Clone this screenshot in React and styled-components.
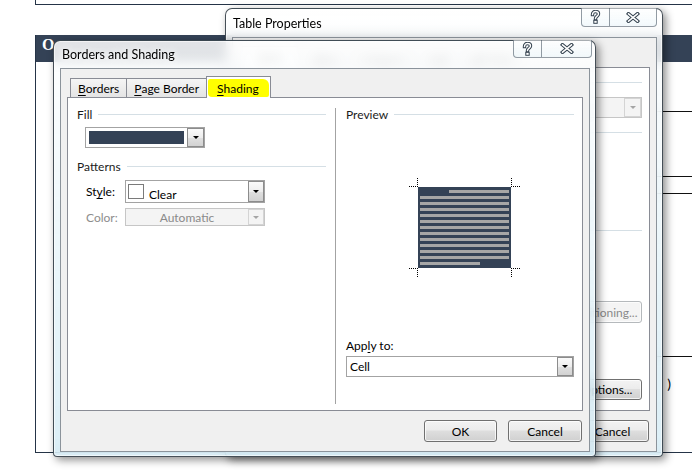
import React from "react";
import styled, { createGlobalStyle } from "styled-components";

const UI_FONT = `Lato, "Noto Sans", "Liberation Sans", sans-serif`;

const GlobalStyle = createGlobalStyle`
  html, body {
    margin: 0;
    padding: 0;
    background: #fff;
  }
  body {
    font-family: ${UI_FONT};
    font-size: 12px;
    color: #000;
  }
`;

const Desktop = styled.div`
  position: relative;
  width: 692px;
  height: 475px;
  overflow: hidden;
  background: #fff;
`;

/* Word document behind the dialogs */

const Document = styled.div`
  position: absolute;
  inset: 0;
  padding-left: 35px;
`;

const PrevBox = styled.div`
  height: 4px;
  border-left: 1px solid #253447;
  border-bottom: 1px solid #253447;
`;

const DocTable = styled.div`
  margin-top: 30px;
  width: 700px;
  border-left: 1px solid #253447;
  border-bottom: 1px solid #253447;
  display: flex;
  flex-direction: column;
`;

const HeaderRow = styled.div`
  height: 27px;
  background: #344256;
  color: #fff;
  font-family: "Liberation Serif", serif;
  font-weight: bold;
  font-size: 16px;
  line-height: 20px;
  padding-left: 6px;
`;

const DocRow = styled.div`
  height: ${(p) => p.$h}px;
  margin-left: 330px;
  border-bottom: ${(p) => (p.$last ? "none" : "1px solid #111")};
  display: flex;
  justify-content: flex-end;
  align-items: flex-start;
  padding-right: 65px;
  padding-top: ${(p) => p.$pt || 0}px;
  font-size: 14px;
`;

/* windows */

const Window = styled.div`
  position: absolute;
  left: ${(p) => p.$x}px;
  top: ${(p) => p.$y}px;
  width: ${(p) => p.$w}px;
  height: ${(p) => p.$h}px;
  box-sizing: border-box;
  display: flex;
  flex-direction: column;
  padding: 0 5px 4px 6px;
  border: 1px solid rgba(38, 48, 58, 0.85);
  border-radius: 7px 7px 4px 4px;
  background: linear-gradient(
    rgba(255, 255, 255, 0.86),
    rgba(226, 242, 248, 0.78) 60%,
    rgba(210, 234, 244, 0.8)
  );
  backdrop-filter: blur(6px);
  box-shadow: 3px 3px 9px rgba(0, 0, 0, 0.45),
    inset 0 0 0 1px rgba(255, 255, 255, 0.6);
`;

const TitleBar = styled.div`
  height: ${(p) => p.$h}px;
  flex-shrink: 0;
  display: flex;
  align-items: center;
`;

const TitleText = styled.span`
  flex: 1;
  padding-left: ${(p) => p.$indent}px;
  font-size: 12.5px;
  color: #000;
  text-shadow: 0 0 6px #fff, 0 0 10px #fff;
`;

const CaptionGroup = styled.div`
  display: flex;
  align-self: flex-start;
  margin-top: -1px;
  margin-right: ${(p) => p.$inset}px;
`;

const CaptionButton = styled.div`
  width: ${(p) => p.$w}px;
  height: ${(p) => p.$h}px;
  box-sizing: border-box;
  display: flex;
  align-items: center;
  justify-content: center;
  border: 1px solid rgba(60, 75, 90, 0.55);
  border-top: none;
  background: linear-gradient(rgba(255, 255, 255, 0.55), rgba(228, 242, 248, 0.45));
  &:first-child {
    border-radius: 0 0 0 4px;
  }
  &:last-child {
    border-left: none;
    border-radius: 0 0 4px 0;
  }
`;

const HelpGlyph = () => (
  <svg width="11" height="14" viewBox="0 0 11 14">
    <g fill="none" strokeLinecap="square">
      <path d="M2.5 4.5 C2.5 2.3 4 1.5 5.5 1.5 C7.3 1.5 8.5 2.6 8.5 4 C8.5 6 5.5 6.2 5.5 8.5" stroke="#34424f" strokeWidth="3.4" />
      <rect x="3.8" y="10.3" width="3.4" height="3" fill="#fff" stroke="#34424f" strokeWidth="1" />
      <path d="M2.5 4.5 C2.5 2.3 4 1.5 5.5 1.5 C7.3 1.5 8.5 2.6 8.5 4 C8.5 6 5.5 6.2 5.5 8.5" stroke="#fff" strokeWidth="1.4" />
    </g>
  </svg>
);

const CloseGlyph = () => (
  <svg width="14" height="11" viewBox="0 0 14 11">
    <g strokeLinecap="square">
      <path d="M2.5 1.8 L11.5 9.2 M11.5 1.8 L2.5 9.2" stroke="#34424f" strokeWidth="3.6" />
      <path d="M2.5 1.8 L11.5 9.2 M11.5 1.8 L2.5 9.2" stroke="#fff" strokeWidth="1.5" />
    </g>
  </svg>
);

const Client = styled.div`
  flex: 1;
  min-height: 0;
  display: flex;
  flex-direction: column;
  background: #f0f0f0;
  border: 1px solid #8b939b;
`;

/* tabs */

const TabStrip = styled.div`
  display: flex;
  align-items: flex-end;
  height: ${(p) => p.$h}px;
  margin: ${(p) => p.$top}px 6px 0 6px;
  padding-left: 3px;
  position: relative;
  z-index: 1;
`;

const Tab = styled.div`
  height: ${(p) => (p.$active ? 22 : 19)}px;
  min-width: ${(p) => p.$min || 0}px;
  box-sizing: border-box;
  display: flex;
  align-items: center;
  justify-content: center;
  padding: 0 ${(p) => (p.$active ? 1 : 7)}px;
  margin-bottom: ${(p) => (p.$active ? -1 : 0)}px;
  margin-left: -1px;
  border: 1px solid #898c95;
  border-bottom: none;
  background: ${(p) => (p.$active ? "#fff" : "linear-gradient(#f5f5f5, #e4e4e4)")};
  &:first-child {
    margin-left: 0;
  }
  u {
    text-decoration: underline;
    text-underline-offset: 2px;
  }
`;

const Highlight = styled.span`
  display: flex;
  align-items: center;
  height: 18px;
  margin-top: 1px;
  padding: 0 10px 0 9px;
  background: #ffff00;
  border-radius: 2px 6px 2px 4px;
`;

const TabPanel = styled.div`
  flex: 1;
  min-height: 0;
  background: #fff;
  border: 1px solid #898c95;
  margin: 0 6px 0 6px;
`;

const Footer = styled.div`
  display: flex;
  justify-content: flex-end;
  gap: 11px;
  padding: 9px 7px 9px;
`;

const PushButton = styled.div`
  width: ${(p) => p.$w}px;
  height: ${(p) => p.$h || 22}px;
  box-sizing: border-box;
  display: flex;
  align-items: center;
  justify-content: center;
  white-space: nowrap;
  border: 1px solid ${(p) => (p.$disabled ? "#b5b9bc" : "#707070")};
  border-radius: 3px;
  color: ${(p) => (p.$disabled ? "#8a8a8a" : "#000")};
  background: ${(p) =>
    p.$disabled
      ? "#f4f4f4"
      : "linear-gradient(#f3f3f3, #ececec 45%, #dedede 50%, #d0d0d0)"};
  box-shadow: inset 0 0 0 1px rgba(255, 255, 255, 0.75);
`;

/* Borders and Shading content */

const ShadingGrid = styled.div`
  height: 100%;
  box-sizing: border-box;
  display: grid;
  grid-template-columns: 249px 1px 1fr;
  column-gap: 9px;
  padding: 10px 8px 6px 9px;
`;

const Divider = styled.div`
  background: #a3a3a3;
`;

const Column = styled.div`
  display: flex;
  flex-direction: column;
  padding-left: ${(p) => p.$pl || 0}px;
`;

const GroupHeading = styled.div`
  display: flex;
  align-items: center;
  gap: 6px;
  height: 13px;
  margin-top: ${(p) => p.$mt || 0}px;
  color: #1b1b1b;
  &::after {
    content: "";
    flex: 1;
    height: 1px;
    background: #d5dfe5;
  }
`;

const Combo = styled.div`
  display: flex;
  align-items: stretch;
  box-sizing: border-box;
  width: ${(p) => (p.$w ? `${p.$w}px` : "auto")};
  height: ${(p) => p.$h}px;
  border: 1px solid ${(p) => (p.$disabled ? "#c6c6c6" : "#a3a3a3")};
  background: ${(p) => (p.$disabled ? "#f4f4f4" : "#fff")};
  color: ${(p) => (p.$disabled ? "#8a8a8a" : "#000")};
`;

const ComboText = styled.span`
  flex: 1;
  display: flex;
  align-items: center;
  justify-content: ${(p) => (p.$center ? "center" : "flex-start")};
  padding: ${(p) => p.$pad || "0 3px"};
`;

const ArrowButton = styled.span`
  width: ${(p) => p.$w || 16}px;
  box-sizing: border-box;
  display: flex;
  align-items: center;
  justify-content: center;
  border: 1px solid ${(p) => (p.$disabled ? "#d4d4d4" : "#8c8c8c")};
  background: ${(p) =>
    p.$disabled ? "#f4f4f4" : "linear-gradient(#fafafa, #ededed 50%, #e0e0e0 51%, #d2d2d2)"};
`;

const Triangle = styled.span`
  width: 0;
  height: 0;
  border-left: 3px solid transparent;
  border-right: 3px solid transparent;
  border-top: 3px solid ${(p) => (p.$disabled ? "#a5a5a5" : "#000")};
`;

const FillSwatch = styled.span`
  flex: 1;
  margin: 3px;
  background: #344256;
`;

const FillCombo = styled(Combo)`
  margin: 6px 0 0 8px;
`;

const PatternRows = styled.div`
  display: grid;
  grid-template-columns: 39px 140px;
  grid-template-rows: 23px 18px;
  row-gap: 5px;
  align-items: center;
  margin: 7px 0 0 9px;
`;

const FieldLabel = styled.span`
  color: ${(p) => (p.$disabled ? "#8d8d8d" : "#000")};
  u {
    text-underline-offset: 2px;
  }
`;

const ClearSwatch = styled.span`
  width: 16px;
  height: 15px;
  box-sizing: border-box;
  margin: 3px 0 0 2px;
  border: 1px solid #7a7a7a;
  background: #fff;
`;

const PreviewStage = styled.div`
  position: relative;
  align-self: flex-start;
  margin: 57px 0 0 63px;
  padding: 9px;
`;

const PreviewCell = styled.div`
  width: 93px;
  height: 81px;
  box-sizing: border-box;
  background: #344256;
  padding: 3px 2px;
  display: flex;
  flex-direction: column;
  gap: 3px;
`;

const TextLine = styled.div`
  height: 3px;
  background: #a6a6a6;
  margin-left: ${(p) => p.$indent || 0}px;
  width: ${(p) => (p.$w ? `${p.$w}px` : "auto")};
`;

const CropMark = styled.span`
  position: absolute;
  ${(p) => (p.$v ? "width: 0; height: 9px;" : "width: 9px; height: 0;")}
  ${(p) => (p.$v ? "border-left: 1px dotted #000;" : "border-top: 1px dotted #000;")}
  ${(p) => p.$pos}
`;

const ApplyBlock = styled.div`
  margin-top: auto;
  margin-bottom: 27px;
  display: flex;
  flex-direction: column;
  gap: 3px;
`;

/* Table Properties content */

const TpPanel = styled.div`
  height: 100%;
  box-sizing: border-box;
  display: flex;
  flex-direction: column;
  align-items: flex-end;
  padding: 0 7px 0 9px;
`;

const Rule = styled.div`
  align-self: stretch;
  height: 1px;
  background: #d5dfe5;
  margin-top: ${(p) => p.$mt || 0}px;
`;

const ButtonRow = styled.div`
  display: flex;
  gap: 8px;
  margin-top: ${(p) => p.$mt || 0}px;
`;

const cropMarks = [
  { v: false, pos: "left: 0; top: 8px;" },
  { v: true, pos: "left: 8px; top: 0;" },
  { v: false, pos: "right: 0; top: 8px;" },
  { v: true, pos: "right: 8px; top: 0;" },
  { v: false, pos: "left: 0; bottom: 8px;" },
  { v: true, pos: "left: 8px; bottom: 0;" },
  { v: false, pos: "right: 0; bottom: 8px;" },
  { v: true, pos: "right: 8px; bottom: 0;" },
];

const Captions = ({ inset, h, xw }) => (
  <CaptionGroup $inset={inset}>
    <CaptionButton $w={29} $h={h}>
      <HelpGlyph />
    </CaptionButton>
    <CaptionButton $w={xw} $h={h}>
      <CloseGlyph />
    </CaptionButton>
  </CaptionGroup>
);

const TableProperties = () => (
  <Window $x={225} $y={8} $w={438} $h={449}>
    <TitleBar $h={28}>
      <TitleText $indent={1}>Table Properties</TitleText>
      <Captions inset={0} h={19} xw={47} />
    </TitleBar>
    <Client>
      <TabStrip $h={21} $top={8}>
        <Tab $active $min={56}>
          <span style={{ padding: "0 8px" }}>
            <u>T</u>able
          </span>
        </Tab>
        <Tab $min={58}>
          <u>R</u>ow
        </Tab>
        <Tab $min={59}>
          Col<u>u</u>mn
        </Tab>
        <Tab $min={53}>
          C<u>e</u>ll
        </Tab>
        <Tab $min={56}>
          <u>A</u>lt Text
        </Tab>
      </TabStrip>
      <TabPanel>
        <TpPanel>
          <Rule $mt={14} />
          <Combo $disabled $w={130} $h={21} style={{ marginTop: 14 }}>
            <ComboText />
            <ArrowButton $disabled $w={17}>
              <Triangle $disabled />
            </ArrowButton>
          </Combo>
          <Rule $mt={14} />
          <Rule $mt={97} />
          <ButtonRow $mt={70}>
            <PushButton $disabled $w={76}>
              Positioning...
            </PushButton>
          </ButtonRow>
          <ButtonRow $mt={56}>
            <PushButton $w={70} $h={21}>
              Options...
            </PushButton>
          </ButtonRow>
        </TpPanel>
      </TabPanel>
      <Footer>
        <PushButton $w={73}>Cancel</PushButton>
      </Footer>
    </Client>
  </Window>
);

const BordersAndShading = () => (
  <Window $x={53} $y={40} $w={543} $h={417}>
    <TitleBar $h={27}>
      <TitleText $indent={2}>Borders and Shading</TitleText>
      <Captions inset={-2} h={18} xw={50} />
    </TitleBar>
    <Client>
      <TabStrip $h={21} $top={7}>
        <Tab>
          <u>B</u>orders
        </Tab>
        <Tab>
          <u>P</u>age Border
        </Tab>
        <Tab $active>
          <Highlight>
            <u>S</u>hading
          </Highlight>
        </Tab>
      </TabStrip>
      <TabPanel>
        <ShadingGrid>
          <Column>
            <GroupHeading>Fill</GroupHeading>
            <FillCombo $w={120} $h={21}>
              <FillSwatch />
              <ArrowButton $w={17}>
                <Triangle />
              </ArrowButton>
            </FillCombo>
            <GroupHeading $mt={12}>Patterns</GroupHeading>
            <PatternRows>
              <FieldLabel>
                St<u>y</u>le:
              </FieldLabel>
              <Combo $h={23}>
                <ClearSwatch />
                <ComboText $pad="5px 5px 0">Clear</ComboText>
                <ArrowButton $w={16}>
                  <Triangle />
                </ArrowButton>
              </Combo>
              <FieldLabel $disabled>Color:</FieldLabel>
              <Combo $h={18} $disabled>
                <ComboText $center>Automatic</ComboText>
                <ArrowButton $disabled $w={16}>
                  <Triangle $disabled />
                </ArrowButton>
              </Combo>
            </PatternRows>
          </Column>
          <Divider />
          <Column $pl={1}>
            <GroupHeading>Preview</GroupHeading>
            <PreviewStage>
              {cropMarks.map((m, i) => (
                <CropMark key={i} $v={m.v} $pos={m.pos} />
              ))}
              <PreviewCell>
                <TextLine $indent={29} />
                {Array.from({ length: 11 }).map((_, i) => (
                  <TextLine key={i} />
                ))}
                <TextLine $w={60} />
              </PreviewCell>
            </PreviewStage>
            <ApplyBlock>
              <FieldLabel>
                App<u>l</u>y to:
              </FieldLabel>
              <Combo $h={21}>
                <ComboText>Cell</ComboText>
                <ArrowButton $w={16}>
                  <Triangle />
                </ArrowButton>
              </Combo>
            </ApplyBlock>
          </Column>
        </ShadingGrid>
      </TabPanel>
      <Footer>
        <PushButton $w={73}>OK</PushButton>
        <PushButton $w={74}>Cancel</PushButton>
      </Footer>
    </Client>
  </Window>
);

export default function App() {
  return (
    <Desktop>
      <GlobalStyle />
      <Document>
        <PrevBox />
        <DocTable>
          <HeaderRow>O</HeaderRow>
          <DocRow $h={49} />
          <DocRow $h={64} />
          <DocRow $h={16} />
          <DocRow $h={162} />
          <DocRow $h={77} $pt={18} $last>
            )
          </DocRow>
        </DocTable>
      </Document>
      <TableProperties />
      <BordersAndShading />
    </Desktop>
  );
}
